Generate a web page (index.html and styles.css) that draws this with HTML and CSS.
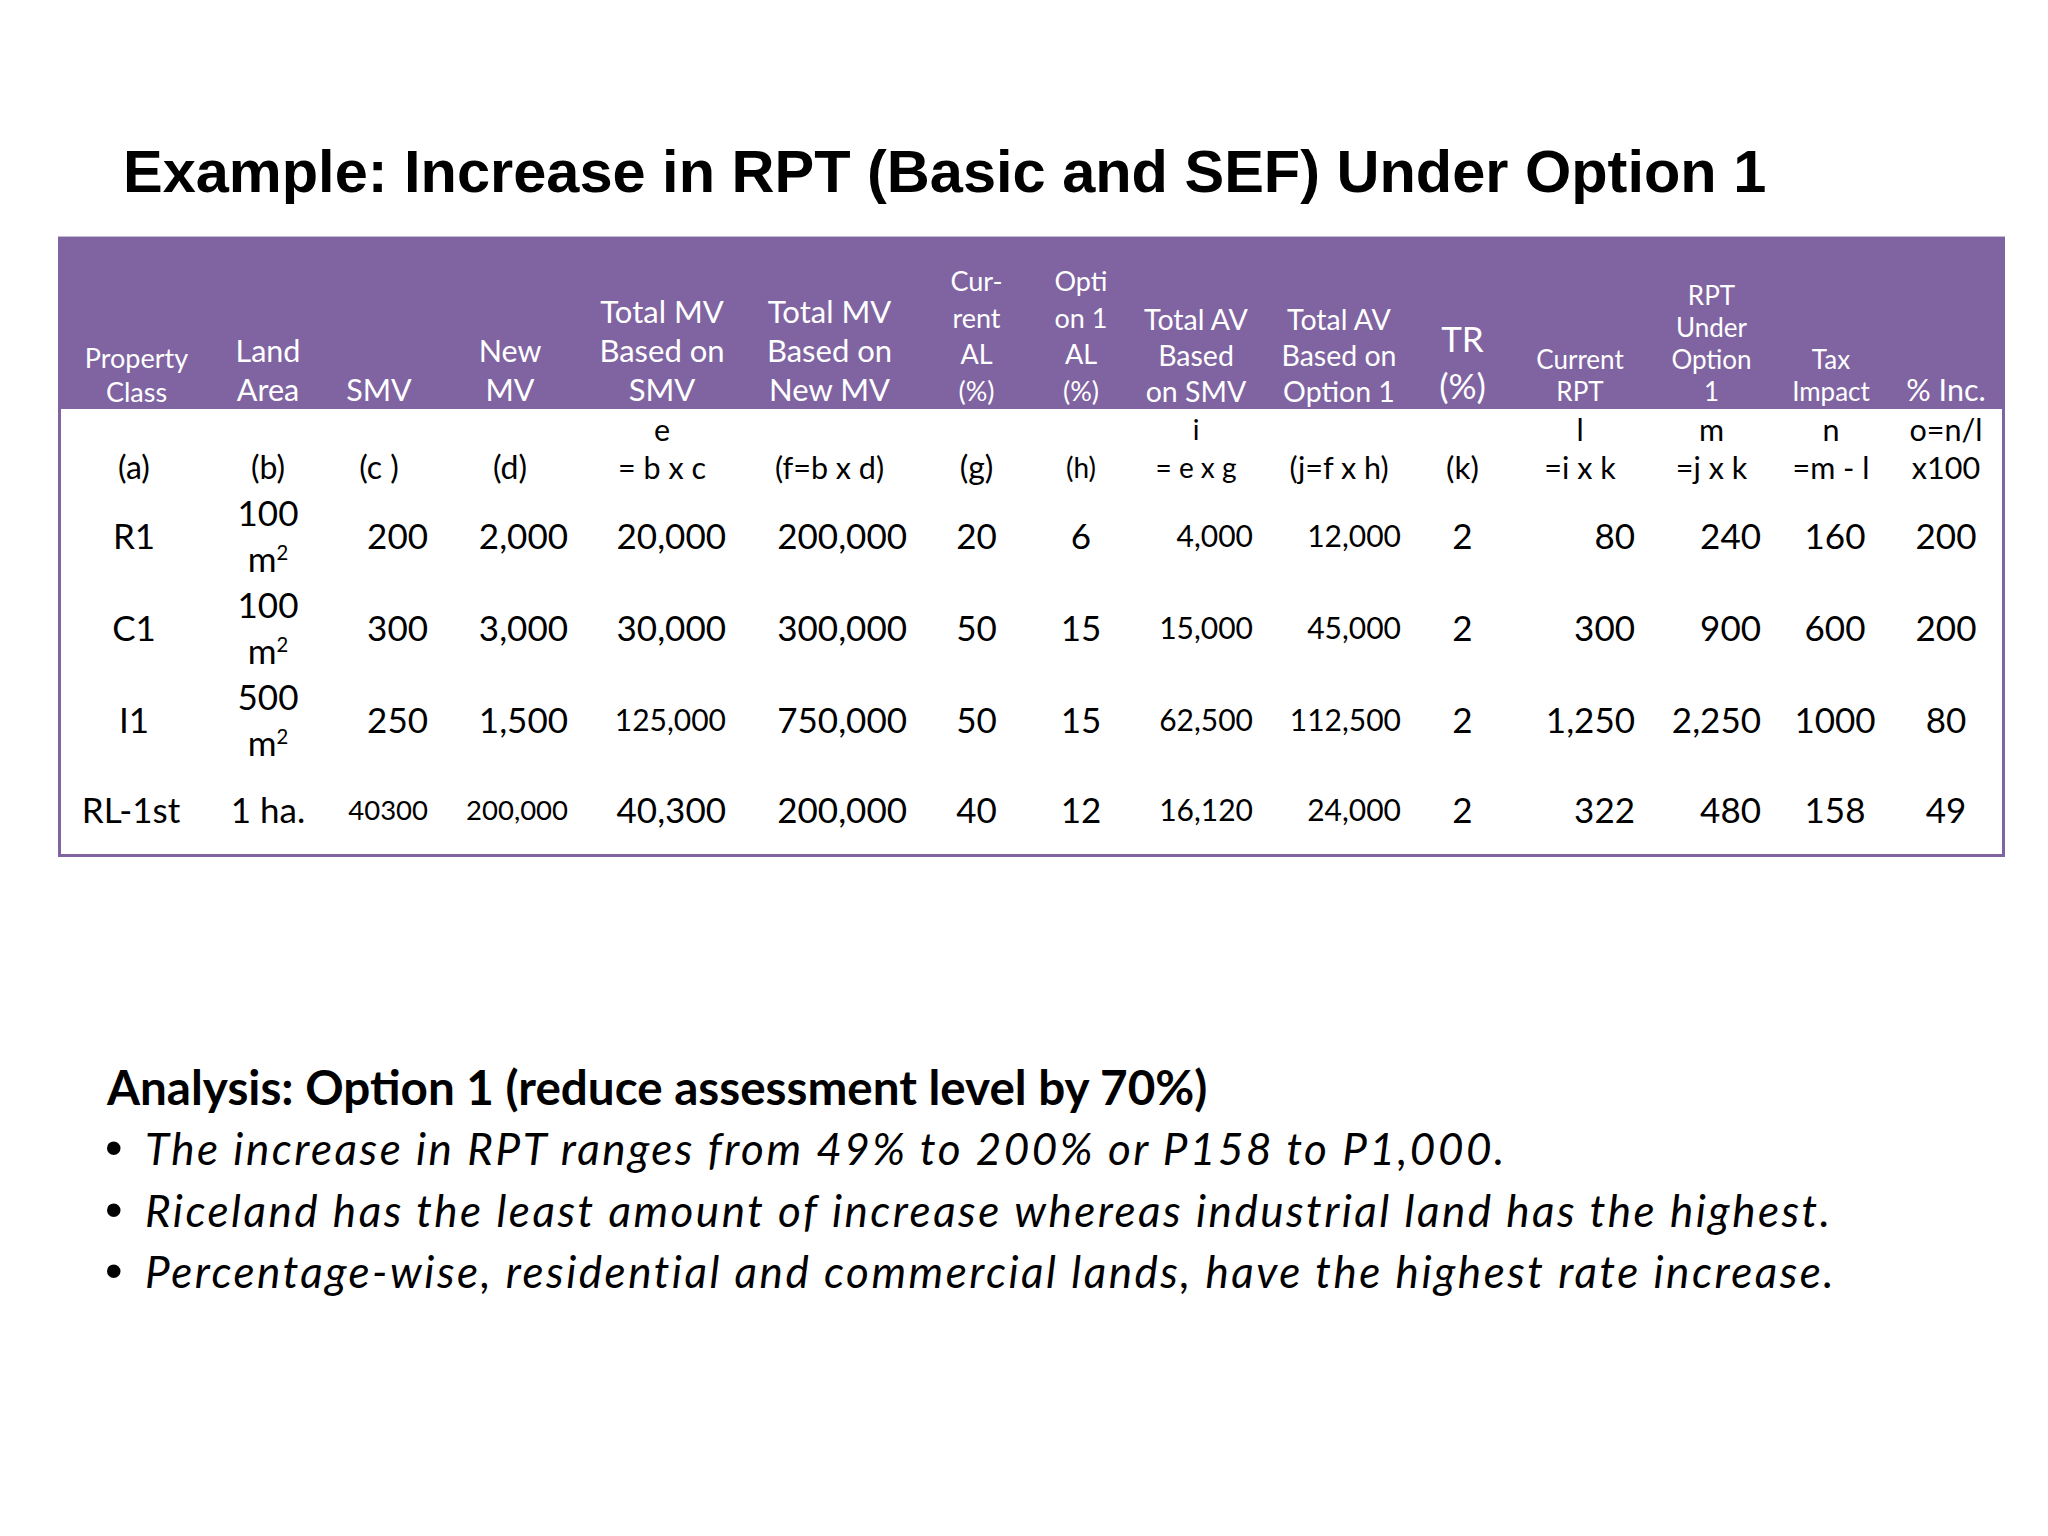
FILE: index.html
```html
<!DOCTYPE html>
<html lang="en">
<head>
<meta charset="utf-8">
<title>Example: Increase in RPT (Basic and SEF) Under Option 1</title>
<link rel="stylesheet" href="styles.css">
</head>
<body>
<div class="slide">
  <h1 class="title">Example: Increase in RPT (Basic and SEF) Under Option 1</h1>

  <div class="tablebox">
    <table>
      <colgroup>
        <col class="w1"><col class="w2"><col class="w3"><col class="w4"><col class="w5">
        <col class="w6"><col class="w7"><col class="w8"><col class="w9"><col class="w10">
        <col class="w11"><col class="w12"><col class="w13"><col class="w14"><col class="w15">
      </colgroup>
      <thead>
        <tr class="hrow">
          <th class="h27 ap5">Property<br>Class</th>
          <th class="h30 ap5">Land<br>Area</th>
          <th class="h30 am6">SMV</th>
          <th class="h30 am6">New<br>MV</th>
          <th class="h31 am4">Total MV<br>Based on<br>SMV</th>
          <th class="h31 am6">Total MV<br>Based on<br>New MV</th>
          <th class="h27c a0">Cur-<br>rent<br>AL<br>(%)</th>
          <th class="h27c am2">Opti<br>on 1<br>AL<br>(%)</th>
          <th class="h28 am8">Total AV<br>Based<br>on SMV</th>
          <th class="h28 am6">Total AV<br>Based on<br>Option 1</th>
          <th class="h35 a0">TR<br>(%)</th>
          <th class="h26 a0">Current<br>RPT</th>
          <th class="h26 am6">RPT<br>Under<br>Option<br>1</th>
          <th class="h26 am4">Tax<br>Impact</th>
          <th class="h30 a0">% Inc.</th>
        </tr>
      </thead>
      <tbody>
        <tr class="frow">
          <td class="ap3 fpar">(a)</td>
          <td class="ap5 fpar">(b)</td>
          <td class="am6 fpar">(c )</td>
          <td class="am6 fpar">(d)</td>
          <td class="am4">e<br>= b x c</td>
          <td class="am6">(f=b x d)</td>
          <td class="a0 fpar">(g)</td>
          <td class="am2 fsm">(h)</td>
          <td class="am8 fsm">i<br>= e x g</td>
          <td class="am6">(j=f x h)</td>
          <td class="a0 fbig">(k)</td>
          <td class="a0">l<br>=i x k</td>
          <td class="am6">m<br>=j x k</td>
          <td class="am4">n<br>=m - l</td>
          <td class="a0">o=n/l<br>x100</td>
        </tr>
        <tr class="drow">
          <td class="ap3">R1</td>
          <td class="ap5 land">100<br>m<sup>2</sup></td>
          <td class="rt pr18">200</td>
          <td class="rt pr18">2,000</td>
          <td class="rt pr20">20,000</td>
          <td class="rt pr18">200,000</td>
          <td class="a0">20</td>
          <td class="am2">6</td>
          <td class="rt pr17 d30">4,000</td>
          <td class="rt pr19 d30">12,000</td>
          <td class="a0">2</td>
          <td class="rt pr20">80</td>
          <td class="rt pr19">240</td>
          <td class="a0">160</td>
          <td class="a0">200</td>
        </tr>
        <tr class="drow">
          <td class="ap3">C1</td>
          <td class="ap5 land">100<br>m<sup>2</sup></td>
          <td class="rt pr18">300</td>
          <td class="rt pr18">3,000</td>
          <td class="rt pr20">30,000</td>
          <td class="rt pr18">300,000</td>
          <td class="a0">50</td>
          <td class="am2">15</td>
          <td class="rt pr17 d30">15,000</td>
          <td class="rt pr19 d30">45,000</td>
          <td class="a0">2</td>
          <td class="rt pr20">300</td>
          <td class="rt pr19">900</td>
          <td class="a0">600</td>
          <td class="a0">200</td>
        </tr>
        <tr class="drow">
          <td class="ap3">I1</td>
          <td class="ap5 land">500<br>m<sup>2</sup></td>
          <td class="rt pr18">250</td>
          <td class="rt pr18">1,500</td>
          <td class="rt pr20 d30">125,000</td>
          <td class="rt pr18">750,000</td>
          <td class="a0">50</td>
          <td class="am2">15</td>
          <td class="rt pr17 d30">62,500</td>
          <td class="rt pr19 d30">112,500</td>
          <td class="a0">2</td>
          <td class="rt pr20">1,250</td>
          <td class="rt pr19">2,250</td>
          <td class="a0">1000</td>
          <td class="a0">80</td>
        </tr>
        <tr class="drow last">
          <td class="ap1">RL-1st</td>
          <td class="ap5">1 ha.</td>
          <td class="rt pr18 d27">40300</td>
          <td class="rt pr18 d27">200,000</td>
          <td class="rt pr20">40,300</td>
          <td class="rt pr18">200,000</td>
          <td class="a0">40</td>
          <td class="am2">12</td>
          <td class="rt pr17 d30">16,120</td>
          <td class="rt pr19 d30">24,000</td>
          <td class="a0">2</td>
          <td class="rt pr20">322</td>
          <td class="rt pr19">480</td>
          <td class="a0">158</td>
          <td class="a0">49</td>
        </tr>
      </tbody>
    </table>
  </div>

  <div class="analysis">
    <p class="ahead">Analysis: Option 1 (reduce assessment level by 70%)</p>
    <ul class="bullets">
      <li>The increase in RPT ranges from 49% to 200% or P158 to P1,000.</li>
      <li>Riceland has the least amount of increase whereas industrial land has the highest.</li>
      <li>Percentage-wise, residential and commercial lands, have the highest rate increase.</li>
    </ul>
  </div>
</div>
</body>
</html>
```

FILE: styles.css
```css
html, body {
  margin: 0;
  padding: 0;
  background: #ffffff;
}

.slide {
  width: 2048px;
  height: 1536px;
  box-sizing: border-box;
  padding-top: 137px;
  overflow: hidden;
}

.title {
  margin: 0 0 30px 0;
  padding-left: 123px;
  font-family: "Liberation Sans", Arial, sans-serif;
  font-weight: bold;
  font-size: 59.5px;
  line-height: 70px;
  color: #000000;
  white-space: nowrap;
}

/* ---------- table ---------- */
.tablebox {
  margin-left: 58px;
  width: 1947px;
  box-sizing: border-box;
  border: 3px solid #8064a2;
  box-shadow: 0 -1px 0 #c6bbd8;
}

table {
  border-collapse: collapse;
  table-layout: fixed;
  width: 1941px;
  font-family: Lato, "Noto Sans", sans-serif;
  color: #000000;
}

.w1 { width: 140px; }
.w2 { width: 123px; }
.w3 { width: 122px; }
.w4 { width: 140px; }
.w5 { width: 160px; }
.w6 { width: 179px; }
.w7 { width: 103px; }
.w8 { width: 110px; }
.w9 { width: 132px; }
.w10 { width: 150px; }
.w11 { width: 85px; }
.w12 { width: 150px; }
.w13 { width: 125px; }
.w14 { width: 110px; }
.w15 { width: 112px; }

th, td {
  white-space: nowrap;
  text-align: center;
  padding-top: 0;
  padding-bottom: 0;
}

/* horizontal placement helpers */
.a0 { padding-left: 4px; padding-right: 4px; }
.am2 { padding-left: 4px; padding-right: 8px; }
.am4 { padding-left: 4px; padding-right: 12px; }
.am6 { padding-left: 4px; padding-right: 16px; }
.am8 { padding-left: 4px; padding-right: 20px; }
.ap1 { padding-left: 4px; padding-right: 4px; }
.ap3 { padding-left: 10px; padding-right: 4px; }
.ap5 { padding-left: 15px; padding-right: 4px; }

.rt { text-align: right; padding-left: 4px; }
.pr17 { padding-right: 17px; }
.pr18 { padding-right: 18px; }
.pr19 { padding-right: 19px; }
.pr20 { padding-right: 20px; }

/* header */
.hrow {
  height: 169px;
  background: #8064a2;
}

.hrow th {
  font-weight: normal;
  color: #ffffff;
  vertical-align: bottom;
}

.h27 { font-size: 27px; line-height: 34px; }
.h30 { font-size: 30.5px; line-height: 39px; }
.h31 { font-size: 31px; line-height: 39px; }
.h27c { font-size: 27px; line-height: 36.5px; }
.h28 { font-size: 28.5px; line-height: 36px; }
.h35 { font-size: 35px; line-height: 47px; }
.h26 { font-size: 26px; line-height: 32px; padding-bottom: 2px; }

/* formula row */
.frow {
  height: 80px;
}

.frow td {
  font-size: 30.5px;
  line-height: 38px;
  vertical-align: bottom;
  padding-bottom: 3px;
}

.frow td.fpar { font-size: 32px; }
.frow td.fsm { font-size: 28px; }
.frow td.fbig { font-size: 31.5px; }

/* data rows */
.drow {
  height: 92px;
}

.drow.last {
  height: 89px;
}

.drow td {
  font-size: 35px;
  line-height: 47px;
  vertical-align: middle;
}

.drow td.d30 { font-size: 30px; }
.drow td.d27 { font-size: 27.5px; }
.drow td.land { line-height: 46px; }

sup {
  font-size: 58%;
  line-height: 0;
  vertical-align: 0.6em;
}

/* ---------- analysis ---------- */
.analysis {
  margin-top: 198px;
  padding-left: 105px;
  font-family: Lato, "Noto Sans", sans-serif;
  color: #000000;
}

.ahead {
  margin: 0;
  padding-left: 2px;
  font-weight: bold;
  font-size: 47.6px;
  line-height: 63px;
  white-space: nowrap;
}

.bullets {
  margin: 0;
  padding: 0;
  list-style: none;
}

.bullets li {
  display: flex;
  align-items: baseline;
  font-style: italic;
  font-size: 44px;
  letter-spacing: 2.5px;
  line-height: 61.5px;
  white-space: nowrap;
}

.bullets li::before {
  content: "\2022";
  flex: 0 0 40px;
  font-family: "Liberation Sans", Arial, sans-serif;
  font-style: normal;
  font-size: 50px;
  letter-spacing: 0;
}
```
